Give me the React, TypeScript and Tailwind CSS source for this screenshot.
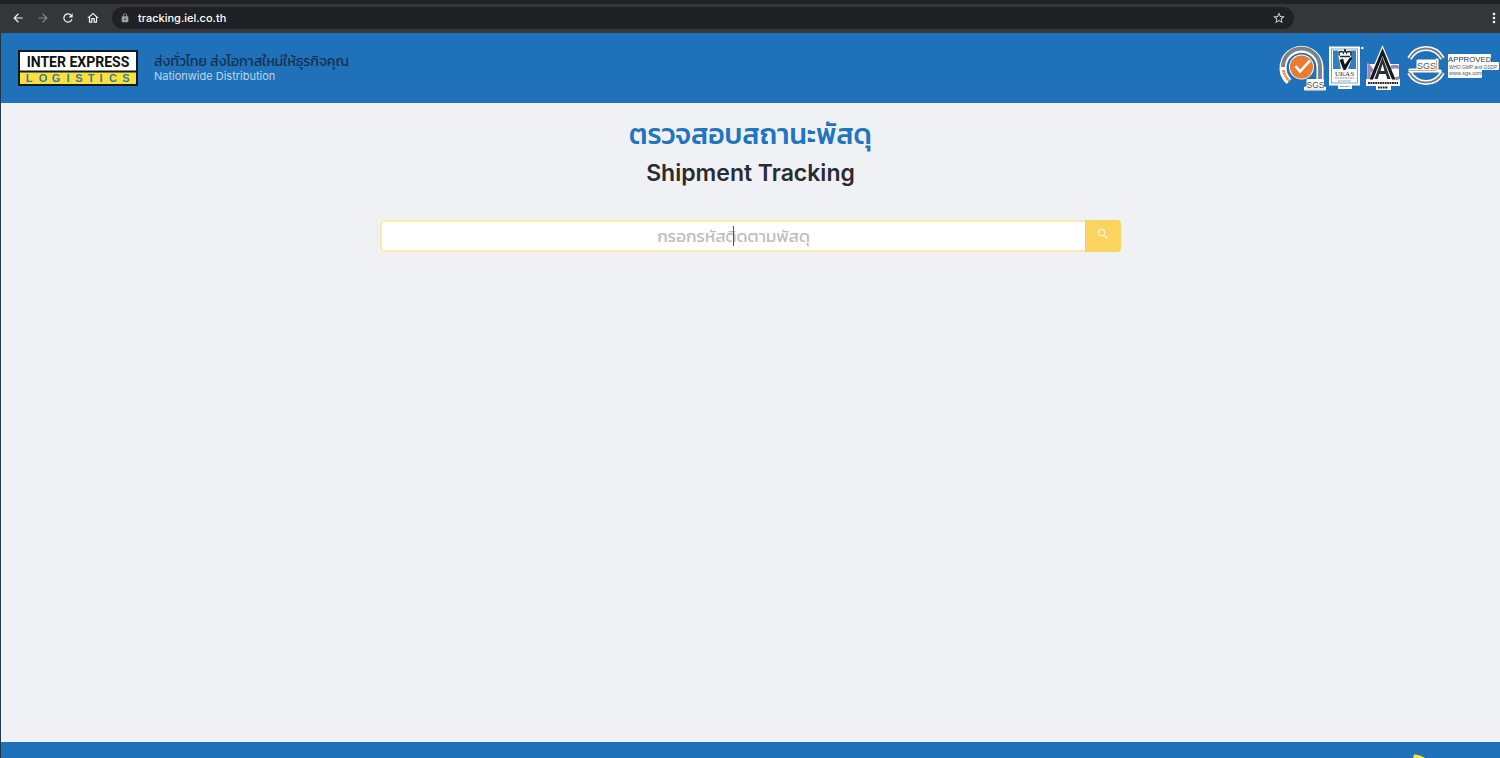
import { useState } from 'react';
import { MdArrowBack, MdArrowForward, MdLock, MdMoreVert, MdOutlineHome, MdRefresh, MdSearch, MdStarBorder } from 'react-icons/md';

function BrowserBar() {
  return (
    <div className="flex items-center h-[33px] pb-px bg-[#35363a] border-t-4 border-[#202124] text-[#f1f1f2]">
      <div className="flex items-center gap-[11px] pl-[11px]">
        <button type="button" aria-label="Back"><MdArrowBack size={14} /></button>
        <button type="button" aria-label="Forward" className="text-[#85868a]"><MdArrowForward size={14} /></button>
        <button type="button" aria-label="Reload"><MdRefresh size={14} /></button>
        <button type="button" aria-label="Home"><MdOutlineHome size={14} /></button>
      </div>
      <div className="flex items-center flex-1 h-[22px] ml-3 px-2 mr-48 rounded-full bg-[#202124]">
        <MdLock size={10} className="text-[#9aa0a6]" />
        <span className="ml-2 text-[11px] leading-4 font-medium text-white">tracking.iel.co.th</span>
        <button type="button" aria-label="Bookmark this page" className="ml-auto text-[#d0d1d4]">
          <MdStarBorder size={14} />
        </button>
      </div>
      <button type="button" aria-label="Browser menu" className="-mr-0.5">
        <MdMoreVert size={16} />
      </button>
    </div>
  );
}

function CompanyLogo() {
  return (
    <svg width="120" height="36" viewBox="0 0 120 36" role="img" aria-label="Inter Express Logistics">
      <rect x="1" y="1" width="118" height="34" fill="#fff" stroke="#101820" strokeWidth="2" />
      <rect x="2" y="22" width="116" height="12" fill="#ffdf3c" />
      <path d="M1 21.5h118" stroke="#101820" strokeWidth="2" />
      <text x="60" y="17" textAnchor="middle" fontFamily="Roboto, sans-serif" fontWeight="700" fontSize="14" fill="#111">INTER EXPRESS</text>
      <text x="11 25 38 50 61 73 83 95 108" y="32" textAnchor="middle" fontFamily="Liberation Sans, sans-serif" fontWeight="700" fontSize="11" fill="#2f809c">LOGISTICS</text>
    </svg>
  );
}

function SgsIsoBadge() {
  return (
    <svg className="overflow-visible" width="46" height="46" viewBox="0 0 46 46" role="img" aria-label="SGS certified">
      <path d="M11 36.5A18.5 18.5 0 1 1 42 22V36" fill="none" stroke="#fff" strokeWidth="7" />
      <path d="M5 22A18.5 18.5 0 0 1 42 22V34" fill="none" stroke="#7d8287" strokeWidth="4" />
      <path d="M5.3 25Q6.5 31.5 11.5 36" fill="none" stroke="#e98a45" strokeWidth="2.6" strokeDasharray="2.4 0.4" />
      <circle cx="23.500" cy="22" r="12.500" fill="#fff" />
      <circle cx="23.500" cy="22" r="11.500" fill="#e97b30" />
      <path d="M17.5 21l4.5 5.5 10-11" fill="none" stroke="#fff" strokeWidth="2.6" />
      <path d="M29 34.5h16.500v7.500h2v3h-21v-3H29z" fill="#fff" stroke="#fff" strokeLinejoin="round" />
      <text x="28.500" y="42.500" fontFamily="Liberation Sans, sans-serif" fontSize="8.500" fill="#4c5258">SGS</text>
      <path d="M28 44.200h18" stroke="#e8c4a4" strokeWidth="0.800" />
    </svg>
  );
}

function UkasBadge() {
  return (
    <svg className="overflow-visible" width="34" height="46" viewBox="0 0 34 46" role="img" aria-label="UKAS management systems">
      <rect x="1" y="1.500" width="31" height="39" fill="#fff" />
      <rect x="10" y="39" width="14" height="5" fill="#fff" />
      <rect x="3.500" y="4" width="26" height="34" fill="none" stroke="#5a92c0" strokeWidth="0.800" />
      <path d="M5 5.500h5.500v6l2.500 12.500H5zM23 5.500h5V24h-8l3-8z" fill="#3180c1" />
      <circle cx="34.300" cy="3" r="1.300" fill="#fff" />
      <path d="M11.500 10.500q-1.500-4 1.500-4 2 0 2.500 1.500L17 5l1.500 3q.5-1.500 2.500-1.500 3 0 1.500 4" fill="none" stroke="#222b31" strokeWidth="1.300" />
      <path d="M17 4v2M12 11.500h10" stroke="#222b31" strokeWidth="1.600" />
      <path d="M11.500 15l3.500-1.500 1.800 6L22 12.500h2.500l-7 12.500h-2z" fill="#10161b" />
      <text x="16.500" y="31" textAnchor="middle" fontFamily="Liberation Serif, serif" fontSize="7" fill="#24313b">UKAS</text>
      <path d="M7 33h19M10 36h13M12 41.500h10" stroke="#8b969e" strokeWidth="1.200" strokeDasharray="2 0.500" />
    </svg>
  );
}

function NacBadge() {
  return (
    <svg width="36" height="46" viewBox="0 0 36 46" role="img" aria-label="NAC accreditation">
      <path d="M16.500 0l8 19H33v15h1v7H25v4H10v-4H0v-7h1V19h7.500z" fill="#fff" />
      <path d="M3 34V21.500L11.500 33V21M33 22.500q-2-1-5-1-5 .5-5 6t5 6q3 .5 5-1" fill="none" stroke="#9a86b8" strokeWidth="3.400" />
      <path d="M16.500 2.500L3 35h27z" fill="#fff" />
      <path d="M16.500 3L3.500 34.500H7L16.500 11 26 34.500h3.500z" fill="#16191d" />
      <path d="M16.500 12L8.500 34h3.200L13.200 29h6.600l1.500 5h3.200zM16.500 19l2 7h-4z" fill="#2b2e32" fillRule="evenodd" />
      <rect x="0" y="35" width="34" height="6" fill="#fff" />
      <path d="M2 38h30M12 42.500h10" stroke="#242424" strokeWidth="2.200" strokeDasharray="1.800 0.600" />
    </svg>
  );
}

function SgsGmpBadge() {
  return (
    <svg width="94" height="46" viewBox="0 0 94 46" role="img" aria-label="SGS approved">
      <path d="M3.500 13.500Q9 3.500 20 3.500t16.500 10M3.500 27.500Q9 37.500 20 37.500t16.500-10" fill="none" stroke="#fff" strokeWidth="5" />
      <path d="M3.500 13.500Q9 3.500 20 3.500t16.500 10M3.500 27.500Q9 37.500 20 37.500t16.500-10" fill="none" stroke="#75828a" strokeWidth="1.800" />
      <path d="M11 15h19v-1h2v11h3v2H3v-3h8z" fill="#fff" stroke="#fff" strokeLinejoin="round" />
      <text x="11" y="24" fontFamily="Liberation Sans, sans-serif" fontSize="9" fill="#55585c">SGS</text>
      <path d="M3 25.500h27M30.500 15v10" stroke="#e9a36d" strokeWidth="1" />
      <path d="M43 10h41v8h8v6H75v8H43z" fill="#fff" stroke="#fff" strokeWidth="2" strokeLinejoin="round" />
      <text x="42" y="17" fontFamily="Liberation Sans, sans-serif" fontSize="7.800" fill="#343c42">APPROVED</text>
      <text x="43" y="24" fontFamily="Liberation Sans, sans-serif" fontSize="4.800" fill="#4a5a66">WHO GMP and GSDP</text>
      <text x="43" y="30" fontFamily="Liberation Sans, sans-serif" fontSize="5.500" fill="#4a5a66">www.sgs.com</text>
    </svg>
  );
}

function SiteHeader() {
  return (
    <header className="flex items-center justify-between h-[70px] pl-[17px] bg-[#1f72ba]">
      <div className="flex items-center gap-4">
        <CompanyLogo />
        <div>
          <p className="text-[14px] leading-4 text-[#17304a] font-['Kanit','Noto_Sans_Thai','Noto_Sans',sans-serif]">
            ส่งทั่วไทย ส่งโอกาสใหม่ให้ธุรกิจคุณ
          </p>
          <p className="text-[11px] leading-3 text-[#bed5ea]">Nationwide Distribution</p>
        </div>
      </div>
      <div className="flex items-center gap-1">
        <SgsIsoBadge />
        <UkasBadge />
        <NacBadge />
        <SgsGmpBadge />
      </div>
    </header>
  );
}

export default function App() {
  const [code, setCode] = useState('');

  return (
    <div className="flex flex-col min-h-screen font-['Inter',sans-serif]">
      <BrowserBar />
      <div className="flex flex-col flex-1 border-l border-[#24384a] bg-[#f0f1f4]">
        <SiteHeader />

        <main className="flex-1 flex flex-col items-center pt-[11px]">
          <h1 className="text-[28px] leading-10 font-medium text-[#1f75c0] font-['Kanit','Noto_Sans_Thai','Noto_Sans',sans-serif]">
            ตรวจสอบสถานะพัสดุ
          </h1>
          <h2 className="text-[23px] leading-[38px] font-semibold text-[#2a2b33]">Shipment Tracking</h2>

          {/* Search box */}
          <form
            onSubmit={(e) => e.preventDefault()}
            className="flex w-full max-w-[741px] h-8 mt-7 font-['Kanit','Noto_Sans_Thai','Noto_Sans',sans-serif]"
          >
            <div className="relative flex-1">
              <input
                type="text"
                aria-label="กรอกรหัสติดตามพัสดุ"
                placeholder="กรอกรหัสติดตามพัสดุ"
                value={code}
                onChange={(e) => setCode(e.target.value)}
                className="w-full h-full text-center text-[17px] text-gray-800 placeholder:text-[#bdbdbd] bg-white border-2 border-r-0 border-[#faeaad] rounded-l-sm caret-transparent focus:outline-none"
              />
              {!code && <span className="absolute left-1/2 top-1.5 h-5 w-px bg-[#555]" />}
            </div>
            <button
              type="submit"
              aria-label="Search"
              className="flex items-center justify-center w-9 pb-1 rounded-r-sm bg-[#fbd45f] text-[#fff6dc]"
            >
              <MdSearch size={14} />
            </button>
          </form>
        </main>

        <footer className="flex justify-end h-4 pr-[74px] bg-[#1f72ba] overflow-hidden">
          <svg width="14" height="16" viewBox="0 0 14 16" aria-hidden="true">
            <path d="M2 12.500q6 0 11 3.500H1z" fill="#f4e72c" />
          </svg>
        </footer>
      </div>
    </div>
  );
}
